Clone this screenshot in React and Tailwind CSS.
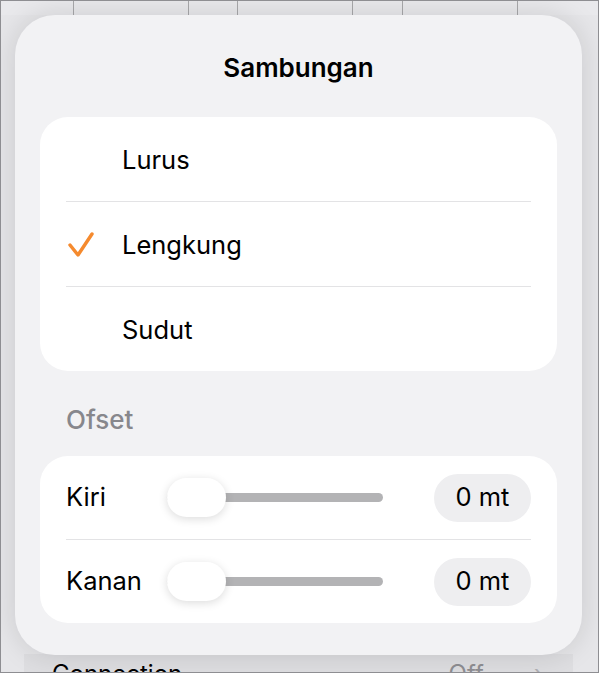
import React from "react";

const options = [
  { id: "lurus", label: "Lurus" },
  { id: "lengkung", label: "Lengkung" },
  { id: "sudut", label: "Sudut" },
];

const offsets = [
  { id: "kiri", label: "Kiri", value: "0 mt" },
  { id: "kanan", label: "Kanan", value: "0 mt" },
];

const Check = () => (
  <svg width="28" height="26" viewBox="0 0 28 26" fill="none">
    <polyline
      points="3,13 11,23 25,2"
      stroke="#f58a2e"
      strokeWidth="3.4"
      strokeLinecap="round"
      strokeLinejoin="round"
    />
  </svg>
);

const Slider = () => (
  <div className="relative flex h-[39px] w-[216px] items-center">
    <div className="h-[9px] w-full rounded-full bg-[#b3b3b5]" />
    <div className="absolute left-0 top-0 h-[39px] w-[59px] rounded-full bg-white shadow-[0_2px_10px_rgba(0,0,0,0.14)]" />
  </div>
);

export default function App() {
  const selected = "lengkung";

  return (
    <div className="relative flex h-[673px] w-[599px] flex-col overflow-hidden border border-[#8e8e92] bg-[#e6e6e9] font-['Inter',sans-serif] text-black">
      {/* background content */}
      <div className="flex h-[14px] shrink-0 bg-[#e9e9ec]">
        <div className="w-[72px]" />
        <div className="w-[115px] border-l border-[#a8a8ab]" />
        <div className="w-[49px] border-l border-[#a8a8ab]" />
        <div className="w-[115px] border-l border-[#a8a8ab]" />
        <div className="w-[50px] border-l border-[#a8a8ab]" />
        <div className="w-[115px] border-l border-[#a8a8ab]" />
        <div className="flex-1 border-l border-[#a8a8ab]" />
      </div>
      <div className="flex flex-1 flex-col justify-end px-[23px]">
        <div className="mr-[2px] flex h-[40px] mb-[-22px] items-center bg-[#dedee1] pl-[28px] pr-[30px] text-[24px]">
          <span>Connection</span>
          <span className="ml-auto text-[#8e8e93]">Off</span>
          <span className="ml-[50px] text-[#b0b0b4]">›</span>
        </div>
      </div>

      {/* popover */}
      <div className="absolute left-[14px] top-[14px] flex w-[567px] flex-col rounded-[40px] bg-[#f2f2f4] px-[25px] pb-[32px] shadow-[0_0_28px_rgba(0,0,0,0.13)]">
        <div className="flex h-[102px] items-center justify-center pt-[3px] text-[26px] font-semibold">
          Sambungan
        </div>

        <div className="flex flex-col rounded-[28px] bg-white">
          {options.map((o, i) => (
            <React.Fragment key={o.id}>
              {i > 0 && <div className="mx-[26px] h-px bg-[#e3e3e5]" />}
              <div className="flex h-[84px] items-center pl-[27px] pt-[2px] text-[25.5px]">
                <div className="w-[55px]">{o.id === selected && <Check />}</div>
                <span>{o.label}</span>
              </div>
            </React.Fragment>
          ))}
        </div>

        <div className="h-[85px] pl-[26px] pt-[33px] text-[26px] font-medium leading-[32px] text-[#87878c]">
          Ofset
        </div>

        <div className="flex flex-col rounded-[28px] bg-white px-[26px]">
          {offsets.map((o, i) => (
            <React.Fragment key={o.id}>
              {i > 0 && <div className="h-px bg-[#e3e3e5]" />}
              <div className="flex h-[83px] items-center text-[25.5px]">
                <span className="w-[101px]">{o.label}</span>
                <Slider />
                <div className="ml-auto flex h-[48px] w-[97px] items-center justify-center rounded-full bg-[#eeeef0]">
                  {o.value}
                </div>
              </div>
            </React.Fragment>
          ))}
        </div>
      </div>
    </div>
  );
}
